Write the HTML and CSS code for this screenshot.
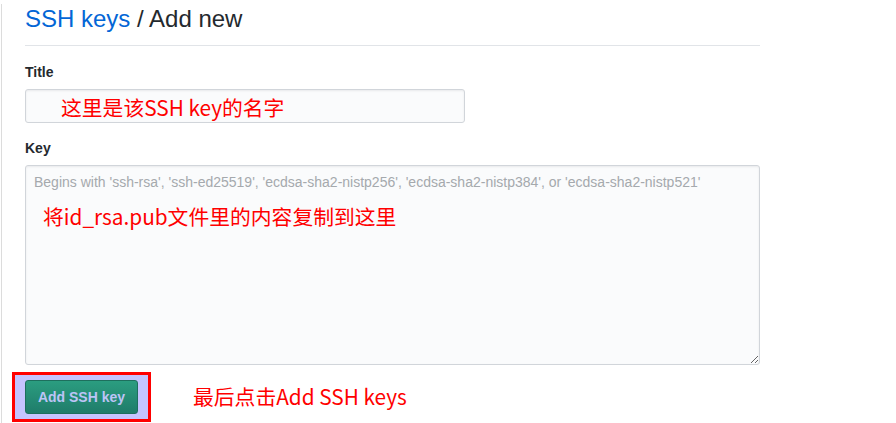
FILE: index.html
```html
<!DOCTYPE html>
<html lang="zh-CN">
<head>
<meta charset="utf-8">
<title>SSH keys / Add new</title>
<link rel="stylesheet" href="styles.css">
</head>
<body>
<div class="page">
  <div class="content">
    <h2 class="subhead"><a class="crumb" href="#">SSH keys</a> / Add new</h2>
    <form class="form">
      <div class="field">
        <label class="label" for="title">Title</label>
        <div class="control">
          <input class="input" id="title" type="text">
          <span class="note note-title">这里是该SSH key的名字</span>
        </div>
      </div>
      <div class="field">
        <label class="label" for="key">Key</label>
        <div class="control">
          <textarea class="textarea" id="key" placeholder="Begins with 'ssh-rsa', 'ssh-ed25519', 'ecdsa-sha2-nistp256', 'ecdsa-sha2-nistp384', or 'ecdsa-sha2-nistp521'"></textarea>
          <span class="note note-key">将id_rsa.pub文件里的内容复制到这里</span>
        </div>
      </div>
      <div class="actions">
        <div class="highlight">
          <button class="btn" type="button">Add SSH key</button>
        </div>
        <span class="note-inline">最后点击Add SSH keys</span>
      </div>
    </form>
  </div>
</div>
</body>
</html>
```
FILE: styles.css
```css
html, body {
  margin: 0;
  padding: 0;
  background: #fff;
}
body {
  font-family: "Liberation Sans", Arial, sans-serif;
  font-size: 14px;
  color: #24292e;
}
.page {
  margin-left: 1px;
  border-left: 1px solid #dcdcdc;
  min-height: 423px;
  box-sizing: border-box;
  padding-left: 23px;
}
.content {
  width: 735px;
}
.subhead {
  margin: 4px 0 0 0;
  padding-bottom: 11px;
  border-bottom: 1px solid #e1e4e8;
  font-size: 24px;
  line-height: 30px;
  font-weight: normal;
  color: #24292e;
}
.crumb {
  color: #0366d6;
  text-decoration: none;
}
.form {
  display: flex;
  flex-direction: column;
}
.field {
  display: flex;
  flex-direction: column;
}
.field:first-child {
  margin-top: 16px;
}
.field + .field {
  margin-top: 15px;
}
.label {
  font-weight: bold;
  font-size: 14px;
  line-height: 20px;
  margin-bottom: 7px;
}
.control {
  position: relative;
}
.input, .textarea {
  display: block;
  box-sizing: border-box;
  background: #fafbfc;
  border: 1px solid #d1d5da;
  border-radius: 3px;
  box-shadow: inset 0 1px 2px rgba(27,31,35,0.075);
  font-family: "Liberation Sans", Arial, sans-serif;
  font-size: 14px;
  line-height: 20px;
  color: #24292e;
  padding: 6px 8px;
  margin: 0;
  outline: none;
}
.input {
  width: 440px;
  height: 34px;
}
.textarea {
  width: 735px;
  height: 200px;
  resize: vertical;
}
.textarea::placeholder {
  color: #a5a9ad;
}
.note, .note-inline {
  font-family: "Noto Sans CJK SC", "Noto Sans", sans-serif;
  font-size: 20.8px;
  line-height: 28px;
  color: #ff0000;
  white-space: nowrap;
}
.note {
  position: absolute;
  pointer-events: none;
}
.note-title {
  left: 36px;
  top: 4px;
}
.note-key {
  left: 18px;
  top: 37px;
}
.actions {
  display: flex;
  align-items: center;
  margin-top: 7px;
  margin-left: -13px;
}
.highlight {
  border: 3px solid #ff0000;
  background: #c4c4ff;
  padding: 5px 10px 5px 10px;
  display: flex;
}
.btn {
  width: 113px;
  height: 34px;
  box-sizing: border-box;
  border: 1px solid #1d6f5d;
  border-radius: 3px;
  background: linear-gradient(180deg, #2b9d80 0%, #1f7c6a 100%);
  color: #bcc4f6;
  font-family: "Liberation Sans", Arial, sans-serif;
  font-weight: bold;
  font-size: 14px;
  line-height: 20px;
  padding: 0;
  cursor: pointer;
}
.note-inline {
  margin-left: 42px;
  margin-top: -2px;
}
```
